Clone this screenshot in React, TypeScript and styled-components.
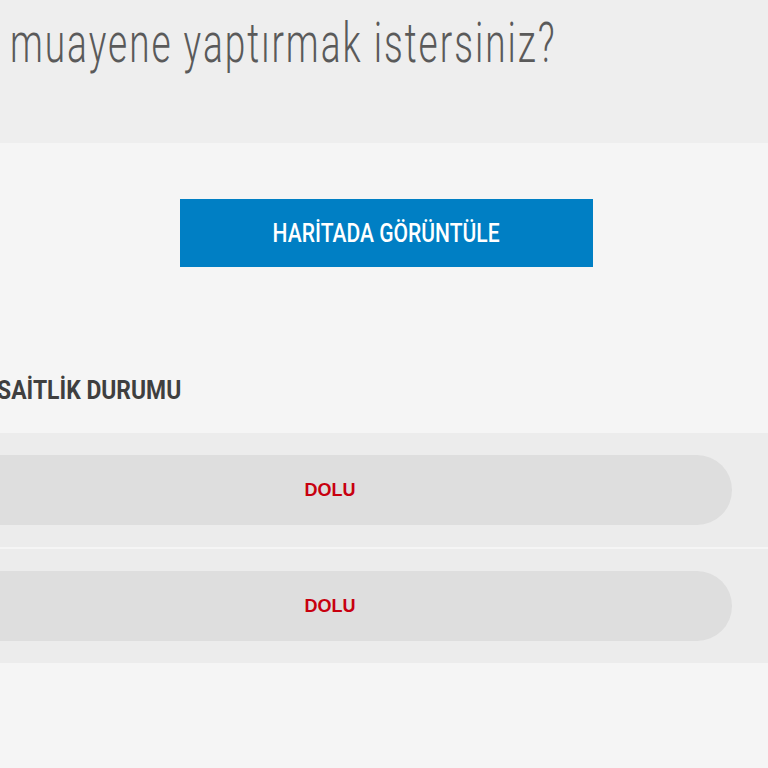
import React from 'react'
import styled, { createGlobalStyle } from 'styled-components'

const GlobalStyle = createGlobalStyle`
  html, body {
    margin: 0;
    padding: 0;
    background: #f5f5f5;
    overflow-x: hidden;
  }
  body {
    font-family: Roboto, "Liberation Sans", Arial, sans-serif;
  }
`

const Page = styled.div`
  display: flex;
  flex-direction: column;
  min-height: 768px;
  background: #f5f5f5;
`

const Header = styled.header`
  height: 143px;
  background: #eeeeee;
  padding-left: 10px;
  box-sizing: border-box;
  overflow: hidden;
`

const Title = styled.h1`
  display: inline-block;
  margin: 0;
  padding-top: 10px;
  font-family: Roboto, "Liberation Sans", sans-serif;
  font-weight: 300;
  font-size: 56px;
  line-height: 66px;
  letter-spacing: 3px;
  color: #5a5a5a;
  white-space: nowrap;
  transform: scaleX(0.661);
  transform-origin: left center;
`

const ButtonWrap = styled.div`
  display: flex;
  justify-content: center;
  padding: 56px 0 0 5px;
`

const MapButton = styled.button`
  width: 413px;
  height: 68px;
  border: none;
  background: #007fc4;
  color: #ffffff;
  cursor: pointer;
  display: flex;
  align-items: center;
  justify-content: center;
`

const ButtonText = styled.span`
  display: inline-block;
  font-family: Roboto, "Liberation Sans", sans-serif;
  font-weight: 500;
  font-size: 26px;
  white-space: nowrap;
  transform: scaleX(0.81);
`

const Section = styled.section`
  margin-top: 108px;
`

const Label = styled.h2`
  margin: 0 0 28px -38px;
  display: inline-block;
  font-family: Roboto, "Liberation Sans", sans-serif;
  font-weight: 700;
  font-size: 26px;
  line-height: 30px;
  color: #3f3f3f;
  white-space: nowrap;
  transform: scaleX(0.88);
  transform-origin: left center;
`

const List = styled.div`
  display: flex;
  flex-direction: column;
  gap: 2px;
`

const Row = styled.div`
  background: #ececec;
  padding: 22px 0;
`

const Pill = styled.div`
  margin-left: -72px;
  width: 804px;
  height: 70px;
  border-radius: 35px;
  background: #dedede;
  display: flex;
  align-items: center;
  justify-content: center;
`

const Status = styled.span<{ $full: boolean }>`
  font-family: "Liberation Sans", Arial, sans-serif;
  font-weight: 700;
  font-size: 18px;
  color: ${({ $full }) => ($full ? '#c8000f' : '#2a9a3a')};
`

const slots = [{ full: true }, { full: true }]

export default function App() {
  return (
    <Page>
      <GlobalStyle />
      <Header>
        <Title>muayene yaptırmak istersiniz?</Title>
      </Header>
      <ButtonWrap>
        <MapButton>
          <ButtonText>HARİTADA GÖRÜNTÜLE</ButtonText>
        </MapButton>
      </ButtonWrap>
      <Section>
        <Label>MÜSAİTLİK DURUMU</Label>
        <List>
          {slots.map((s, i) => (
            <Row key={i}>
              <Pill>
                <Status $full={s.full}>{s.full ? 'DOLU' : 'MÜSAİT'}</Status>
              </Pill>
            </Row>
          ))}
        </List>
      </Section>
    </Page>
  )
}
